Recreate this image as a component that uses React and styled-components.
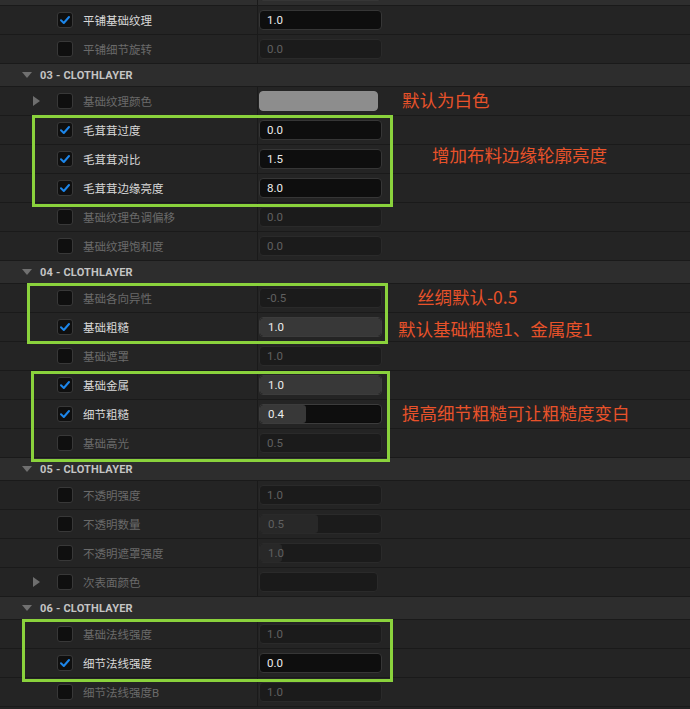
import React from "react";
import styled, { createGlobalStyle } from "styled-components";

const Global = createGlobalStyle`
  html, body { margin: 0; padding: 0; background: #232323; overflow: hidden; }
  body { font-family: Roboto, "Noto Sans", "Noto Sans CJK SC", sans-serif; }
`;

const Page = styled.div`
  position: relative;
  width: 690px;
  height: 709px;
  overflow: hidden;
  background: #232323;
`;

const List = styled.div`
  display: flex;
  flex-direction: column;
  margin-top: -23px;
`;

const Row = styled.div`
  display: grid;
  grid-template-columns: 257px 1fr;
  height: 28px;
  border-bottom: 1px solid #1a1a1a;
  background: ${(p) => (p.$hover ? "#2e2e2e" : "#242424")};
`;

const NameCell = styled.div`
  display: flex;
  align-items: center;
  padding-left: 33px;
`;

const ArrowSlot = styled.div`
  width: 24px;
  display: flex;
  align-items: center;
`;

const RightTri = styled.div`
  width: 0;
  height: 0;
  border-top: 5px solid transparent;
  border-bottom: 5px solid transparent;
  border-left: 7px solid #6e6e6e;
`;

const Check = styled.div`
  width: 14px;
  height: 14px;
  border: 1px solid #383838;
  border-radius: 3px;
  background: #0f0f0f;
  display: flex;
  align-items: center;
  justify-content: center;
  flex-shrink: 0;
`;

const Label = styled.span`
  margin-left: 10px;
  font-size: 11.5px;
  color: ${(p) => (p.$on ? "#d8d8d8" : "#6a6a6a")};
  font-family: Roboto, "Noto Sans CJK SC", sans-serif;
  white-space: nowrap;
`;

const ValueCell = styled.div`
  border-left: 1px solid #1a1a1a;
  display: flex;
  align-items: center;
  padding-left: 1px;
`;

const NumBox = styled.div`
  width: 121px;
  height: 18px;
  border: 1px solid ${(p) => (p.$on ? "#363636" : "#2a2a2a")};
  border-radius: 4px;
  background: ${(p) => (p.$on ? "#0e0e0e" : "#1b1b1b")};
  display: flex;
  align-items: center;
  box-sizing: content-box;
`;

const NumText = styled.span`
  padding-left: 7px;
  font-size: 11.5px;
  color: ${(p) => (p.$on ? "#ececec" : "#606060")};
  font-family: Roboto, "Noto Sans", sans-serif;
`;

const SliderBox = styled.div`
  width: 121px;
  height: 18px;
  border: 1px solid ${(p) => (p.$on ? "#3c3c3c" : "#2a2a2a")};
  border-radius: 4px;
  background: ${(p) => (p.$on ? "#0e0e0e" : "#1b1b1b")};
  box-shadow: ${(p) => (p.$on ? "inset 0 0 0 1px #0b0b0b" : "none")};
  display: grid;
  overflow: hidden;
  box-sizing: content-box;
`;

const SliderFill = styled.div`
  grid-area: 1 / 1;
  height: 100%;
  border-radius: 3px;
  background: ${(p) => (p.$on ? "#383838" : "#282828")};
`;

const SliderText = styled(NumText)`
  grid-area: 1 / 1;
  align-self: center;
  padding-left: 8px;
`;

const Swatch = styled.div`
  width: 117px;
  height: 18px;
  border-radius: 4px;
  border: 1px solid ${(p) => (p.$light ? "#8e8e8e" : "#2a2a2a")};
  background: ${(p) => p.$color};
`;

const Header = styled.div`
  height: 22px;
  border-bottom: 1px solid #1a1a1a;
  background: #2d2d2d;
  display: flex;
  align-items: center;
  padding-left: 22px;
`;

const DownTri = styled.div`
  width: 0;
  height: 0;
  border-left: 5px solid transparent;
  border-right: 5px solid transparent;
  border-top: 6px solid #707070;
  margin-right: 8px;
`;

const HeaderText = styled.span`
  font-size: 11px;
  font-weight: 700;
  color: #c4c4c4;
  font-family: Roboto, "Noto Sans", sans-serif;
  letter-spacing: 0.2px;
`;

const GreenBox = styled.div`
  position: absolute;
  border: 3px solid #8ad23c;
  box-sizing: border-box;
  pointer-events: none;
`;

const Note = styled.div`
  position: absolute;
  font-family: "Noto Sans CJK SC", sans-serif;
  font-size: 17.5px;
  line-height: 1;
  color: #e8522a;
  white-space: nowrap;
`;

const CheckMark = () => (
  <svg width="12" height="12" viewBox="0 0 12 12">
    <polyline
      points="2,6.3 4.8,9 10,3"
      fill="none"
      stroke="#1d86ea"
      strokeWidth="2"
      strokeLinecap="round"
      strokeLinejoin="round"
    />
  </svg>
);

const items = [
  { label: "", on: true, v: { t: "num", s: "" }, hover: true },
  { label: "平铺基础纹理", on: true, v: { t: "num", s: "1.0" } },
  { label: "平铺细节旋转", on: false, v: { t: "num", s: "0.0" } },
  { header: "03 - CLOTHLAYER" },
  { label: "基础纹理颜色", on: false, expand: true, v: { t: "color", c: "#8d8d8d", light: true } },
  { label: "毛茸茸过度", on: true, v: { t: "num", s: "0.0" } },
  { label: "毛茸茸对比", on: true, v: { t: "num", s: "1.5" } },
  { label: "毛茸茸边缘亮度", on: true, v: { t: "num", s: "8.0" } },
  { label: "基础纹理色调偏移", on: false, v: { t: "num", s: "0.0" } },
  { label: "基础纹理饱和度", on: false, v: { t: "num", s: "0.0" } },
  { header: "04 - CLOTHLAYER" },
  { label: "基础各向异性", on: false, v: { t: "num", s: "-0.5" } },
  { label: "基础粗糙", on: true, v: { t: "slider", s: "1.0", p: 1 } },
  { label: "基础遮罩", on: false, v: { t: "num", s: "1.0" } },
  { label: "基础金属", on: true, v: { t: "slider", s: "1.0", p: 1 } },
  { label: "细节粗糙", on: true, v: { t: "slider", s: "0.4", p: 0.38 } },
  { label: "基础高光", on: false, v: { t: "num", s: "0.5" } },
  { header: "05 - CLOTHLAYER" },
  { label: "不透明强度", on: false, v: { t: "num", s: "1.0" } },
  { label: "不透明数量", on: false, v: { t: "slider", s: "0.5", p: 0.48 } },
  { label: "不透明遮罩强度", on: false, v: { t: "slider", s: "1.0", p: 0.18 } },
  { label: "次表面颜色", on: false, expand: true, v: { t: "color", c: "#1a1a1a" } },
  { header: "06 - CLOTHLAYER" },
  { label: "基础法线强度", on: false, v: { t: "num", s: "1.0" } },
  { label: "细节法线强度", on: true, v: { t: "num", s: "0.0" } },
  { label: "细节法线强度B", on: false, v: { t: "num", s: "1.0" } },
];

function Value({ v, on }) {
  if (v.t === "color") return <Swatch $color={v.c} $light={v.light} />;
  if (v.t === "slider")
    return (
      <SliderBox $on={on}>
        <SliderFill $on={on} style={{ width: `${v.p * 100}%` }} />
        <SliderText $on={on}>{v.s}</SliderText>
      </SliderBox>
    );
  return (
    <NumBox $on={on}>
      {v.s && <NumText $on={on}>{v.s}</NumText>}
    </NumBox>
  );
}

export default function App() {
  return (
    <Page>
      <Global />
      <List>
        {items.map((it, i) =>
          it.header ? (
            <Header key={i}>
              <DownTri />
              <HeaderText>{it.header}</HeaderText>
            </Header>
          ) : (
            <Row key={i} $hover={it.hover}>
              <NameCell>
                <ArrowSlot>{it.expand && <RightTri />}</ArrowSlot>
                <Check>{it.on && <CheckMark />}</Check>
                {it.label && <Label $on={it.on}>{it.label}</Label>}
              </NameCell>
              <ValueCell>
                <Value v={it.v} on={it.on} />
              </ValueCell>
            </Row>
          )
        )}
      </List>

      <GreenBox style={{ left: 32, top: 115, width: 361, height: 92 }} />
      <GreenBox style={{ left: 27, top: 283, width: 361, height: 61 }} />
      <GreenBox style={{ left: 31, top: 371, width: 359, height: 91 }} />
      <GreenBox style={{ left: 22, top: 619, width: 371, height: 63 }} />

      <Note style={{ left: 402, top: 91 }}>默认为白色</Note>
      <Note style={{ left: 432, top: 146 }}>增加布料边缘轮廓亮度</Note>
      <Note style={{ left: 417, top: 288 }}>丝绸默认-0.5</Note>
      <Note style={{ left: 398, top: 320 }}>默认基础粗糙1、金属度1</Note>
      <Note style={{ left: 402, top: 404 }}>提高细节粗糙可让粗糙度变白</Note>
    </Page>
  );
}
